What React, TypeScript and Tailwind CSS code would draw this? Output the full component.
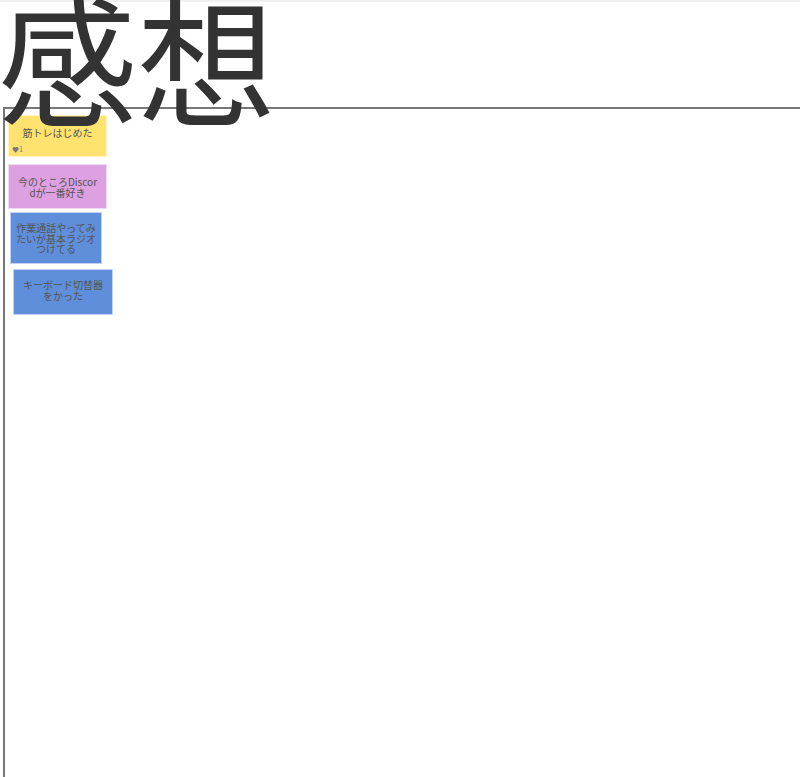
const notes = [
  { text: '筋トレはじめた', className: 'left-[3px] top-[6px] w-[99px] h-[42px] bg-[#ffe36e] px-[5px] pt-[12px]', likes: 1 },
  { text: '今のところDiscordが一番好き', className: 'left-[3px] top-[55px] w-[99px] h-[45px] bg-[#dda0e0] px-[7px] pt-[12px]' },
  { text: '作業通話やってみたいが基本ラジオつけてる', className: 'left-[5px] top-[103px] w-[92px] h-[52px] bg-[#5f8edb] px-[5px] pt-[10px]' },
  { text: 'キーボード切替器をかった', className: 'left-[8px] top-[160px] w-[100px] h-[46px] bg-[#5f8edb] px-[5px] pt-[10px]' },
];

export default function App() {
  return (
    <div className="h-[777px] overflow-hidden bg-white font-['Noto_Sans_CJK_JP','Noto_Sans',sans-serif]">
      <div className="h-[2px] bg-[#f0f0f0]" />
      <h1 className="relative z-10 h-[105px] ml-[-2px] text-[139px] leading-[108px] text-[#333] font-normal whitespace-nowrap">
        感想
      </h1>
      <div className="relative ml-[3px] h-[700px] border-l-2 border-t-2 border-[#777]">
        {notes.map((n) => (
          <div
            key={n.text}
            className={`absolute border border-white/60 text-center text-[10px] leading-[10.5px] text-[#555] break-all ${n.className}`}
          >
            {n.text}
            {n.likes && (
              <div className="absolute left-[3px] bottom-[3px] text-[7px] leading-none text-[#777]">
                ♥{n.likes}
              </div>
            )}
          </div>
        ))}
      </div>
    </div>
  );
}
